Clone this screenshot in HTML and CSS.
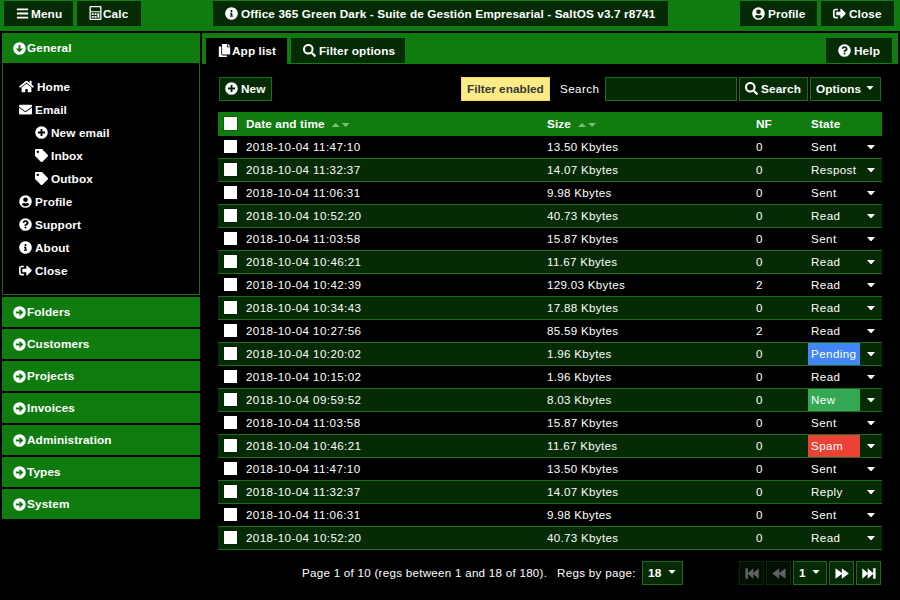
FILE: index.html
```html
<!DOCTYPE html>
<html lang="en">
<head>
<meta charset="utf-8">
<title>SaltOS</title>
<link rel="stylesheet" href="styles.css">
</head>
<body>
<svg class="defs" aria-hidden="true">
<symbol id="plus" viewBox="0 0 512 512"><path fill-rule="evenodd" d="M256 8a248 248 0 1 0 0 496a248 248 0 1 0 0-496zM218 116h76v102h102v76H294v102h-76V294H116v-76h102z"/></symbol>
<symbol id="info" viewBox="0 0 512 512"><path fill-rule="evenodd" d="M256 8C119 8 8 119 8 256s111 248 248 248 248-111 248-248S393 8 256 8zm0 110c23 0 42 19 42 42s-19 42-42 42-42-19-42-42 19-42 42-42zm56 254c0 7-5 12-12 12h-88c-7 0-12-5-12-12v-24c0-7 5-12 12-12h12v-64h-12c-7 0-12-5-12-12v-24c0-7 5-12 12-12h64c7 0 12 5 12 12v100h12c7 0 12 5 12 12v24z"/></symbol>
<symbol id="help" viewBox="0 0 512 512"><path fill-rule="evenodd" d="M504 256a248 248 0 1 1-496 0a248 248 0 1 1 496 0zM263 90c-55 0-89 23-117 64-3 5-2 12 3 16l35 26c5 4 13 3 17-2 18-23 30-36 57-36 21 0 46 13 46 33 0 15-13 23-33 34-23 13-54 29-54 70v13h78v-6c0-28 82-29 82-105 0-58-60-107-114-107zm-7 248a40 40 0 1 0 0 80a40 40 0 1 0 0-80z"/></symbol>
<symbol id="user" viewBox="0 0 512 512"><path fill-rule="evenodd" d="M256 8a248 248 0 1 0 0 496a248 248 0 1 0 0-496zm0 88a92 92 0 1 1 0 184a92 92 0 1 1 0-184zm0 344c-59 0-111-27-145-69 18-34 53-57 95-57 9 0 27 10 50 10s41-10 50-10c42 0 77 23 95 57-34 42-86 69-145 69z"/></symbol>
<symbol id="exit" viewBox="0 0 512 512"><path d="M497 273L329 441c-15 15-41 5-41-17v-96H152c-13 0-24-11-24-24v-96c0-13 11-24 24-24h136V88c0-21 26-32 41-17l168 168c9 9 9 25 0 34zM192 436v-40c0-7-5-12-12-12H96c-18 0-32-14-32-32V160c0-18 14-32 32-32h84c7 0 12-5 12-12V76c0-7-5-12-12-12H96C43 64 0 107 0 160v192c0 53 43 96 96 96h84c7 0 12-5 12-12z"/></symbol>
<symbol id="search" viewBox="0 0 512 512"><path fill-rule="evenodd" d="M505 443L405 343c-4-4-11-7-17-7h-16c27-35 44-80 44-128C416 93 323 0 208 0S0 93 0 208s93 208 208 208c48 0 93-16 128-44v16c0 6 3 13 7 17l100 100c9 9 24 9 34 0l28-28c9-10 9-25 0-34zM208 336a128 128 0 1 1 0-256a128 128 0 1 1 0 256z"/></symbol>
<symbol id="bars" viewBox="0 0 448 512"><path d="M16 60h416q16 0 16 16v40q0 16-16 16H16q-16 0-16-16V76q0-16 16-16zm0 160h416q16 0 16 16v40q0 16-16 16H16q-16 0-16-16v-40q0-16 16-16zm0 160h416q16 0 16 16v40q0 16-16 16H16q-16 0-16-16v-40q0-16 16-16z"/></symbol>
<symbol id="calc" viewBox="0 0 12 14"><path fill-rule="evenodd" d="M1 0h10q1 0 1 1v12q0 1-1 1H1q-1 0-1-1V1q0-1 1-1zm.3 1.3v3.9h9.4V1.3zM1.3 6.3v6.4h9.4V6.3zM2.3 7.3h1.9v1.8H2.3zm2.8 0H7v1.8H5.1zm2.8 0h1.9v4.5H7.9zm-5.6 2.8h1.9v1.7H2.3zm2.8 0H7v1.7H5.1z"/></symbol>
<symbol id="copy" viewBox="0 0 448 512"><path d="M320 448v40c0 13-11 24-24 24H24c-13 0-24-11-24-24V120c0-13 11-24 24-24h72v296c0 31 25 56 56 56h168zm0-344V0H152c-13 0-24 11-24 24v368c0 13 11 24 24 24h272c13 0 24-11 24-24V128H344c-13 0-24-11-24-24zm121-31L375 7c-5-5-11-7-17-7h-6v96h96v-6c0-6-2-12-7-17z"/></symbol>
<symbol id="home" viewBox="0 0 576 512"><path d="M280 148L96 300v164q0 16 16 16l112-1q16 0 16-16v-95q0-16 16-16h64q16 0 16 16v96q0 16 16 16l112 1q16 0 16-16V300L296 148q-8-6-16 0zM572 251l-84-69V44q0-12-12-12h-56q-12 0-12 12v72l-90-74q-30-24-61 0L4 251q-9 9-1 17l26 31q8 9 16 2L280 107q8-6 16 0l235 194q9 7 17-2l26-31q8-9-2-17z"/></symbol>
<symbol id="mail" viewBox="0 0 512 512"><path d="M502 191c4-3 10 0 10 5v204c0 26-22 48-48 48H48c-26 0-48-22-48-48V196c0-5 6-8 10-5 22 17 52 40 154 114 21 15 57 48 92 47 35 1 72-32 92-47 102-74 132-97 154-114zM256 320c23 0 56-29 73-41 133-97 143-105 174-129 6-5 9-12 9-19V112c0-26-22-48-48-48H48C22 64 0 86 0 112v19c0 7 3 14 9 19 31 24 41 32 174 129 17 12 50 41 73 41z"/></symbol>
<symbol id="tag" viewBox="0 0 512 512"><path fill-rule="evenodd" d="M0 252V48C0 22 22 0 48 0h204c13 0 25 5 34 14l212 212c19 19 19 49 0 68L294 498c-19 19-49 19-68 0L14 286c-9-9-14-21-14-34zM112 64a48 48 0 1 0 0 96a48 48 0 1 0 0-96z"/></symbol>
<symbol id="right" viewBox="0 0 512 512"><path fill-rule="evenodd" d="M256 8a248 248 0 1 0 0 496a248 248 0 1 0 0-496zM118 220h138V110l152 146-152 146V292H118z"/></symbol>
<symbol id="down" viewBox="0 0 512 512"><path fill-rule="evenodd" d="M256 8a248 248 0 1 0 0 496a248 248 0 1 0 0-496zM220 118h72v138h110L256 408 110 256h110z"/></symbol>
<symbol id="ff" viewBox="0 0 14 11"><path d="M.5.2v10.6L6.8 6v4.8L13.8 5.5 6.8.2V5z"/></symbol>
<symbol id="end" viewBox="0 0 14 11"><path d="M.3.2v10.6L5.7 6v4.8l5.4-4.7v4.7h2.5V.2h-2.5v4.7L5.7.2V5z"/></symbol>
</svg>

<header class="topbar">
  <div class="btn menu"><svg class="i bars"><use href="#bars"/></svg><span>Menu</span></div>
  <div class="btn calc"><svg class="i"><use href="#calc"/></svg><span>Calc</span></div>
  <div class="btn title"><svg class="i"><use href="#info"/></svg><span>Office 365 Green Dark - Suite de Gestión Empresarial - SaltOS v3.7 r8741</span></div>
  <div class="btn profile"><svg class="i"><use href="#user"/></svg><span>Profile</span></div>
  <div class="btn close"><svg class="i"><use href="#exit"/></svg><span>Close</span></div>
</header>

<div class="layout">
<aside class="sidebar">
  <section>
    <h3 class="head"><svg class="i"><use href="#down"/></svg>General</h3>
    <ul class="items">
      <li><svg class="i wide"><use href="#home"/></svg>Home</li>
      <li><svg class="i"><use href="#mail"/></svg>Email</li>
      <li class="sub"><svg class="i"><use href="#plus"/></svg>New email</li>
      <li class="sub"><svg class="i"><use href="#tag"/></svg>Inbox</li>
      <li class="sub"><svg class="i"><use href="#tag"/></svg>Outbox</li>
      <li><svg class="i"><use href="#user"/></svg>Profile</li>
      <li><svg class="i"><use href="#help"/></svg>Support</li>
      <li><svg class="i"><use href="#info"/></svg>About</li>
      <li><svg class="i"><use href="#exit"/></svg>Close</li>
    </ul>
  </section>
  <h3 class="head"><svg class="i"><use href="#right"/></svg>Folders</h3>
  <h3 class="head"><svg class="i"><use href="#right"/></svg>Customers</h3>
  <h3 class="head"><svg class="i"><use href="#right"/></svg>Projects</h3>
  <h3 class="head"><svg class="i"><use href="#right"/></svg>Invoices</h3>
  <h3 class="head"><svg class="i"><use href="#right"/></svg>Administration</h3>
  <h3 class="head"><svg class="i"><use href="#right"/></svg>Types</h3>
  <h3 class="head"><svg class="i"><use href="#right"/></svg>System</h3>
</aside>

<main class="main">
  <nav class="tabs">
    <div class="btn tab-list"><svg class="i"><use href="#copy"/></svg><span>App list</span></div>
    <div class="btn tab-filter"><svg class="i"><use href="#search"/></svg><span>Filter options</span></div>
    <div class="btn tab-help"><svg class="i"><use href="#help"/></svg><span>Help</span></div>
  </nav>
  <div class="content">
    <div class="tools">
      <div class="btn line new"><svg class="i"><use href="#plus"/></svg><span>New</span></div>
      <div class="notice">Filter enabled</div>
      <label class="label" for="q">Search</label>
      <input id="q" class="field" type="text">
      <div class="btn line find"><svg class="i"><use href="#search"/></svg><span>Search</span></div>
      <div class="btn line options"><span>Options</span><i class="caret"></i></div>
    </div>

    <div class="table">
      <div class="row th"><i class="box"></i><span>Date and time<i class="sort"></i></span><span>Size<i class="sort"></i></span><span>NF</span><span class="st">State</span></div>
      <div class="row"><i class="box"></i><span class="date">2018-10-04 11:47:10</span><span>13.50 Kbytes</span><span>0</span><span class="st">Sent</span><i class="caret"></i></div>
      <div class="row"><i class="box"></i><span class="date">2018-10-04 11:32:37</span><span>14.07 Kbytes</span><span>0</span><span class="st">Respost</span><i class="caret"></i></div>
      <div class="row"><i class="box"></i><span class="date">2018-10-04 11:06:31</span><span>9.98 Kbytes</span><span>0</span><span class="st">Sent</span><i class="caret"></i></div>
      <div class="row"><i class="box"></i><span class="date">2018-10-04 10:52:20</span><span>40.73 Kbytes</span><span>0</span><span class="st">Read</span><i class="caret"></i></div>
      <div class="row"><i class="box"></i><span class="date">2018-10-04 11:03:58</span><span>15.87 Kbytes</span><span>0</span><span class="st">Sent</span><i class="caret"></i></div>
      <div class="row"><i class="box"></i><span class="date">2018-10-04 10:46:21</span><span>11.67 Kbytes</span><span>0</span><span class="st">Read</span><i class="caret"></i></div>
      <div class="row"><i class="box"></i><span class="date">2018-10-04 10:42:39</span><span>129.03 Kbytes</span><span>2</span><span class="st">Read</span><i class="caret"></i></div>
      <div class="row"><i class="box"></i><span class="date">2018-10-04 10:34:43</span><span>17.88 Kbytes</span><span>0</span><span class="st">Read</span><i class="caret"></i></div>
      <div class="row"><i class="box"></i><span class="date">2018-10-04 10:27:56</span><span>85.59 Kbytes</span><span>2</span><span class="st">Read</span><i class="caret"></i></div>
      <div class="row"><i class="box"></i><span class="date">2018-10-04 10:20:02</span><span>1.96 Kbytes</span><span>0</span><span class="st blue">Pending</span><i class="caret"></i></div>
      <div class="row"><i class="box"></i><span class="date">2018-10-04 10:15:02</span><span>1.96 Kbytes</span><span>0</span><span class="st">Read</span><i class="caret"></i></div>
      <div class="row"><i class="box"></i><span class="date">2018-10-04 09:59:52</span><span>8.03 Kbytes</span><span>0</span><span class="st green">New</span><i class="caret"></i></div>
      <div class="row"><i class="box"></i><span class="date">2018-10-04 11:03:58</span><span>15.87 Kbytes</span><span>0</span><span class="st">Sent</span><i class="caret"></i></div>
      <div class="row"><i class="box"></i><span class="date">2018-10-04 10:46:21</span><span>11.67 Kbytes</span><span>0</span><span class="st red">Spam</span><i class="caret"></i></div>
      <div class="row"><i class="box"></i><span class="date">2018-10-04 11:47:10</span><span>13.50 Kbytes</span><span>0</span><span class="st">Sent</span><i class="caret"></i></div>
      <div class="row"><i class="box"></i><span class="date">2018-10-04 11:32:37</span><span>14.07 Kbytes</span><span>0</span><span class="st">Reply</span><i class="caret"></i></div>
      <div class="row"><i class="box"></i><span class="date">2018-10-04 11:06:31</span><span>9.98 Kbytes</span><span>0</span><span class="st">Sent</span><i class="caret"></i></div>
      <div class="row"><i class="box"></i><span class="date">2018-10-04 10:52:20</span><span>40.73 Kbytes</span><span>0</span><span class="st">Read</span><i class="caret"></i></div>
    </div>

    <footer class="pager">
      <span class="summary">Page 1 of 10 (regs between 1 and 18 of 180).</span>
      <span class="per">Regs by page:</span>
      <div class="btn line size"><span>18</span><i class="caret"></i></div>
      <div class="btn line nav off first"><svg class="i flip"><use href="#end"/></svg></div>
      <div class="btn line nav off"><svg class="i flip"><use href="#ff"/></svg></div>
      <div class="btn line page"><span>1</span><i class="caret"></i></div>
      <div class="btn line nav"><svg class="i"><use href="#ff"/></svg></div>
      <div class="btn line nav"><svg class="i"><use href="#end"/></svg></div>
    </footer>
  </div>
</main>
</div>
</body>
</html>
```
FILE: styles.css
```css
* { box-sizing: border-box; }
body {
  margin: 0;
  width: 900px;
  height: 600px;
  overflow: hidden;
  background: #000;
  color: #fff;
  font: 11.6px/16px "Liberation Sans", Arial, sans-serif;
  letter-spacing: 0.3px;
  white-space: nowrap;
}
.defs { position: absolute; width: 0; height: 0; }
.i { width: 13px; height: 13px; fill: #fff; flex: none; }

.btn, .head, .items, .th, .notice { font-size: 11.8px; font-weight: bold; letter-spacing: 0.1px; }
.btn {
  display: flex;
  align-items: center;
  height: 25px;
  padding-left: 12px;
  background: #052b05;
}
.btn .i { margin: -1px 3px 0 0; }

.topbar { display: flex; height: 31px; padding: 1px 6px 0 4px; background: #107c10; }
.btn.menu { width: 69px; margin-right: 4px; }
.menu .i { margin-right: 2px; }
.calc { width: 64px; }
.calc .i { margin-right: 1px; height: 14px; }
.title { width: 455px; margin-left: 72px; }
.profile { width: 77px; margin-left: 72px; }
.close { width: 73px; margin-left: 4px; }

.layout { display: flex; gap: 2px; padding: 2px 2px 0; }
.sidebar { display: flex; flex-direction: column; gap: 2px; width: 198px; }
.head {
  display: flex;
  align-items: center;
  height: 30px;
  margin: 0;
  padding-left: 11px;
  background: #107c10;
}
.head .i { margin-right: 1px; }
.items {
  height: 232px;
  margin: 0;
  padding: 12px 0 0 16px;
  border: 1px solid #1c6c1c;
  border-top: 0;
  list-style: none;
}
.items li { display: flex; align-items: center; height: 23px; }
.items .i { margin: -1px 3px 0 0; }
.items .wide { width: 15px; }
.items .sub { padding-left: 16px; }

.main { width: 696px; }
.tabs { display: flex; height: 31px; padding: 5px 6px 0 4px; background: #107c10; }
.tab-list { width: 81px; height: 26px; background: #000; }
.tab-list .i { margin-right: 1px; }
.tab-filter { width: 114px; margin-left: 4px; }
.tab-help { width: 66px; margin-left: auto; }

.content { padding: 13px 16px 0; }
.tools { display: flex; padding: 0 1px; }
.line { height: 24px; padding-left: 5px; border: 1px solid #1c6c1c; }
.new { width: 53px; }
.notice {
  width: 89px;
  height: 24px;
  margin-left: 189px;
  padding-left: 5px;
  border: 1px solid #fcd45c;
  background: #fbec88;
  color: #363636;
  line-height: 22px;
  letter-spacing: 0;
}
.label { width: 45px; margin-left: 10px; line-height: 24px; }
.field { width: 132px; height: 24px; padding: 0 4px; border: 1px solid #1c6c1c; background: #052b05; color: #fff; }
.find { width: 69px; margin-left: 2px; }
.options { width: 71px; margin-left: 2px; }
.caret { width: 8px; height: 4px; background: #fff; clip-path: polygon(0 0, 100% 0, 56% 100%, 44% 100%); }
.btn .caret { margin: -3px 6px 0 auto; }

.table { margin-top: 11px; }
.row {
  display: grid;
  grid-template-columns: 22px 301px 209px 52px 52px 22px;
  align-items: center;
  height: 22px;
  padding-left: 6px;
}
.row:nth-child(odd):not(.th) { height: 24px; border: solid #1c6c1c; border-width: 1px 0; background: #052b05; }
.row.th { height: 24px; background: #107c10; }
.date { letter-spacing: 0.41px; }
.box { width: 13px; height: 13px; background: #fff; box-shadow: 0 0 0 1px rgba(0, 0, 0, .25); margin-top: -1px; }
.st { height: 22px; padding-left: 3px; line-height: 22px; }
.row:not(.th) .st, .label { letter-spacing: 0.42px; }
.row > .caret { margin-left: 7px; }
.blue { background: #4285f4; }
.green { background: #34a853; }
.red { background: #ea4335; }
.sort {
  display: inline-block;
  width: 18px;
  height: 4px;
  margin-left: 7px;
  vertical-align: 1px;
  background: #82bb82;
  clip-path: polygon(0 100%, 4px 0, 8px 100%, 14px 100%, 10px 0, 18px 0, 14px 100%);
}

.pager { display: flex; align-items: center; margin-top: 11px; padding: 0 1px 0 84px; }
.summary { width: 255px; letter-spacing: 0.27px; }
.per { width: 85px; }
.size { width: 41px; }
.page { width: 34px; margin-left: 2px; }
.nav { width: 25px; margin-left: 2px; }
.nav.first { margin-left: 56px; }
.nav .i { width: 14px; height: 11px; margin: 0; }
.flip { transform: scaleX(-1); }
.off { opacity: .38; }
```
